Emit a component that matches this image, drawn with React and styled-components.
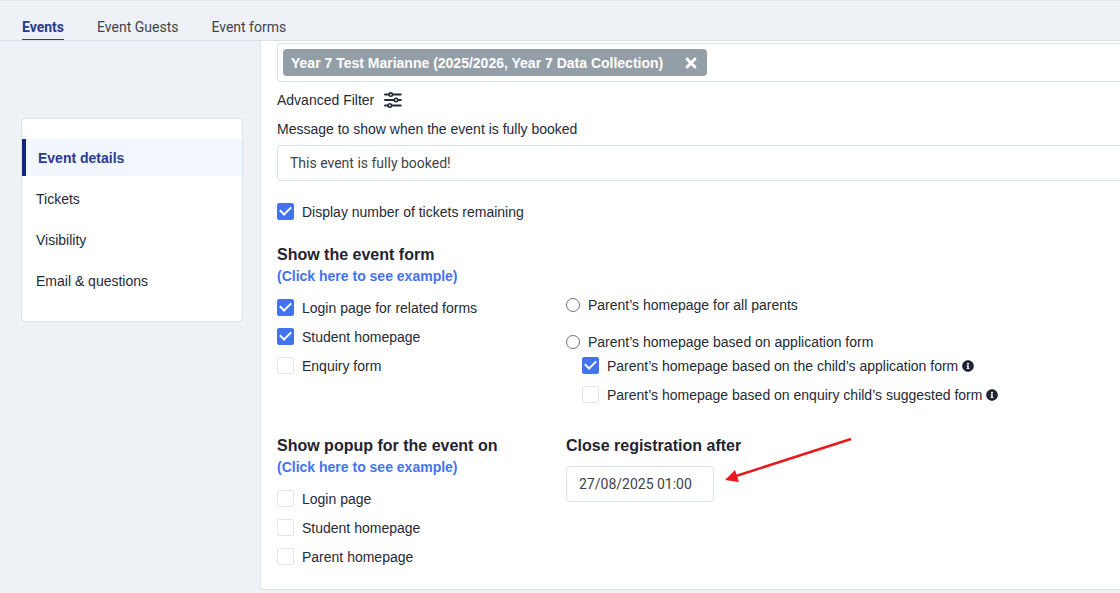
import React from 'react';
import styled, { createGlobalStyle } from 'styled-components';
import { FaInfoCircle, FaTimes } from 'react-icons/fa';

const GlobalStyle = createGlobalStyle`
  * {
    box-sizing: border-box;
  }
  body {
    margin: 0;
    background: #eef1f6;
    color: #252a36;
    font-family: "Liberation Sans", Arial, sans-serif;
    font-size: 14px;
    line-height: 20px;
  }
`;

const Header = styled.header`
  height: 41px;
  border-top: 1px solid #e6e9ee;
  border-bottom: 1px solid #dce1e7;
`;

const Tabs = styled.nav`
  display: flex;
  gap: 33px;
  height: 100%;
  padding: 12px 22px 0;
`;

const Tab = styled.a`
  height: 27px;
  padding-top: 4px;
  border-bottom: 1px solid ${(props) => (props.$active ? '#2b3d94' : 'transparent')};
  color: ${(props) => (props.$active ? '#2a3a92' : '#3f434b')};
  font-family: Roboto, sans-serif;
  font-weight: ${(props) => (props.$active ? 700 : 400)};
  text-decoration: none;
`;

const Layout = styled.div`
  display: grid;
  grid-template-columns: 222px minmax(0, 1fr);
  align-items: start;
  gap: 17px;
  padding-left: 21px;
`;

const Sidebar = styled.aside`
  margin-top: 77px;
  padding: 20px 0 22px;
  background: #fff;
  border: 1px solid #dbe2e8;
  border-radius: 4px;
`;

const SideNav = styled.nav`
  display: flex;
  flex-direction: column;
  gap: 4px;
`;

const SideLink = styled.a`
  display: flex;
  align-items: center;
  height: 37px;
  padding-left: ${(props) => (props.$active ? 12 : 14)}px;
  border-left: ${(props) => (props.$active ? '4px solid #17247c' : '0')};
  background: ${(props) => (props.$active ? '#f1f6ff' : 'transparent')};
  color: ${(props) => (props.$active ? '#2a3a92' : '#252a36')};
  font-weight: ${(props) => (props.$active ? 700 : 400)};
  text-decoration: none;
`;

const Panel = styled.main`
  padding: 2px 0 22px 16px;
  background: #fff;
  border: 1px solid #dbe2e8;
  border-width: 0 0 1px 1px;
  border-bottom-left-radius: 4px;
`;

const SelectBox = styled.div`
  display: flex;
  padding: 5px;
  border: 1px solid #dbe2e8;
  border-right: 0;
  border-radius: 4px 0 0 4px;
`;

const Chip = styled.span`
  display: flex;
  align-items: center;
  gap: 20px;
  height: 27px;
  padding: 0 8px;
  background: #949ea7;
  border-radius: 4px;
  color: #fff;
  font-weight: 700;
`;

const ChipRemove = styled.button`
  display: flex;
  padding: 0;
  background: none;
  border: 0;
  color: inherit;
  font-size: 16px;
  cursor: pointer;
`;

const FilterButton = styled.button`
  display: flex;
  align-items: center;
  gap: 10px;
  margin: 8px 0 9px;
  padding: 0;
  background: none;
  border: 0;
  color: inherit;
  font: inherit;
  cursor: pointer;
`;

const FieldLabel = styled.label`
  display: block;
  margin-bottom: 6px;
`;

const TextField = styled.input`
  display: block;
  width: ${(props) => props.$width || '100%'};
  height: 36px;
  padding: 0 12px;
  background: #fff;
  border: 1px solid #dbe2e8;
  border-right-width: ${(props) => (props.$width ? 1 : 0)}px;
  border-radius: ${(props) => (props.$width ? '4px' : '4px 0 0 4px')};
  color: #3f434b;
  font-family: Roboto, sans-serif;
  font-size: 14px;
`;

const Columns = styled.div`
  display: grid;
  grid-template-columns: 289px minmax(0, 1fr);
  margin-top: ${(props) => props.$top}px;
`;

const Heading = styled.h2`
  display: block;
  margin: 0;
  color: #1f2430;
  font-size: 16px;
  font-weight: 700;
  line-height: 22px;
`;

const ExampleLink = styled.a`
  display: block;
  color: #4373ee;
  font-weight: 700;
  text-decoration: none;
`;

const Options = styled.div`
  display: flex;
  flex-direction: column;
  gap: 9px;
  margin-top: ${(props) => props.$top || 0}px;
  padding-left: ${(props) => props.$indent || 0}px;
`;

const OptionLabel = styled.label`
  display: flex;
  align-items: center;
  gap: 8px;
`;

const Box = styled.input`
  display: grid;
  place-items: center;
  flex: none;
  width: 17px;
  height: 17px;
  margin: 0 0 2px;
  appearance: none;
  background: #fff;
  border: 1px solid #e2e4ea;
  border-radius: 2px;
  &:checked {
    background: #4373ee;
    border-color: #4373ee;
  }
  &:checked::after {
    content: '';
    width: 5px;
    height: 9px;
    margin-bottom: 3px;
    border: solid #fff;
    border-width: 0 2px 2px 0;
    transform: rotate(45deg);
  }
`;

const Circle = styled.input`
  flex: none;
  width: 14px;
  height: 14px;
  margin: 0;
  appearance: none;
  background: #fff;
  border: 1px solid #6d7078;
  border-radius: 50%;
  &:checked {
    border: 4px solid #4373ee;
  }
`;

const ParentOptions = styled.div`
  padding-top: 51px;
`;

const Radios = styled.div`
  display: flex;
  flex-direction: column;
  gap: 17px;
`;

const InfoIcon = styled(FaInfoCircle)`
  flex: none;
  width: 12px;
  height: 12px;
  margin-left: -4px;
  color: #1f2430;
`;

const DateWrap = styled.div`
  position: relative;
  width: 148px;
  margin-top: 9px;
`;

const Arrow = styled.svg`
  position: absolute;
  left: 158px;
  bottom: 16px;
`;

function SlidersIcon() {
  return (
    <svg width="18" height="16" viewBox="0 0 18 16" fill="none" stroke="#252a36" aria-hidden="true">
      <path d="M1 2.6h15.8M1 8h15.8M1 13.4h15.8" strokeWidth="2" strokeLinecap="round" />
      <g fill="#fff" strokeWidth="1.6">
        <circle cx="6.8" cy="2.6" r="1.7" />
        <circle cx="12" cy="8" r="1.7" />
        <circle cx="5.8" cy="13.4" r="1.7" />
      </g>
    </svg>
  );
}

const Check = ({ text, checked, info }) => (
  <OptionLabel>
    <Box type="checkbox" defaultChecked={checked} />
    {text}
    {info && <InfoIcon />}
  </OptionLabel>
);

const Radio = ({ text }) => (
  <OptionLabel>
    <Circle type="radio" name="parent-homepage" />
    {text}
  </OptionLabel>
);

const sections = ['Event details', 'Tickets', 'Visibility', 'Email & questions'];

export default function App() {
  return (
    <>
      <GlobalStyle />
      <Header>
        <Tabs>
          <Tab href="#events" $active>Events</Tab>
          <Tab href="#guests">Event Guests</Tab>
          <Tab href="#forms">Event forms</Tab>
        </Tabs>
      </Header>
      <Layout>
        <Sidebar>
          <SideNav>
            {sections.map((name, i) => (
              <SideLink key={name} href="#section" $active={i === 0}>{name}</SideLink>
            ))}
          </SideNav>
        </Sidebar>
        <Panel>
          <SelectBox>
            <Chip>
              Year 7 Test Marianne (2025/2026, Year 7 Data Collection)
              <ChipRemove type="button" aria-label="Remove"><FaTimes /></ChipRemove>
            </Chip>
          </SelectBox>
          <FilterButton type="button">
            Advanced Filter
            <SlidersIcon />
          </FilterButton>
          <FieldLabel htmlFor="full-message">Message to show when the event is fully booked</FieldLabel>
          <TextField id="full-message" type="text" defaultValue="This event is fully booked!" />
          <Options $top={21}>
            <Check text="Display number of tickets remaining" checked />
          </Options>

          <Columns $top={22}>
            <div>
              <Heading>Show the event form</Heading>
              <ExampleLink href="#example">(Click here to see example)</ExampleLink>
              <Options $top={12}>
                <Check text="Login page for related forms" checked />
                <Check text="Student homepage" checked />
                <Check text="Enquiry form" />
              </Options>
            </div>
            <ParentOptions>
              <Radios>
                <Radio text="Parent’s homepage for all parents" />
                <Radio text="Parent’s homepage based on application form" />
              </Radios>
              <Options $top={4} $indent={16}>
                <Check text="Parent’s homepage based on the child’s application form" checked info />
                <Check text="Parent’s homepage based on enquiry child’s suggested form" info />
              </Options>
            </ParentOptions>
          </Columns>

          <Columns $top={30}>
            <div>
              <Heading>Show popup for the event on</Heading>
              <ExampleLink href="#example">(Click here to see example)</ExampleLink>
              <Options $top={12}>
                <Check text="Login page" />
                <Check text="Student homepage" />
                <Check text="Parent homepage" />
              </Options>
            </div>
            <div>
              <Heading as="label" htmlFor="close-date">Close registration after</Heading>
              <DateWrap>
                <TextField id="close-date" type="text" $width="148px" defaultValue="27/08/2025 01:00" />
                <Arrow width="130" height="50" viewBox="0 0 130 50" aria-hidden="true">
                  <path d="M12 40L127 3" stroke="#e8191c" strokeWidth="2.4" />
                  <path d="M1 44L11 34L15 46Z" fill="#e8191c" />
                </Arrow>
              </DateWrap>
            </div>
          </Columns>
        </Panel>
      </Layout>
    </>
  );
}
